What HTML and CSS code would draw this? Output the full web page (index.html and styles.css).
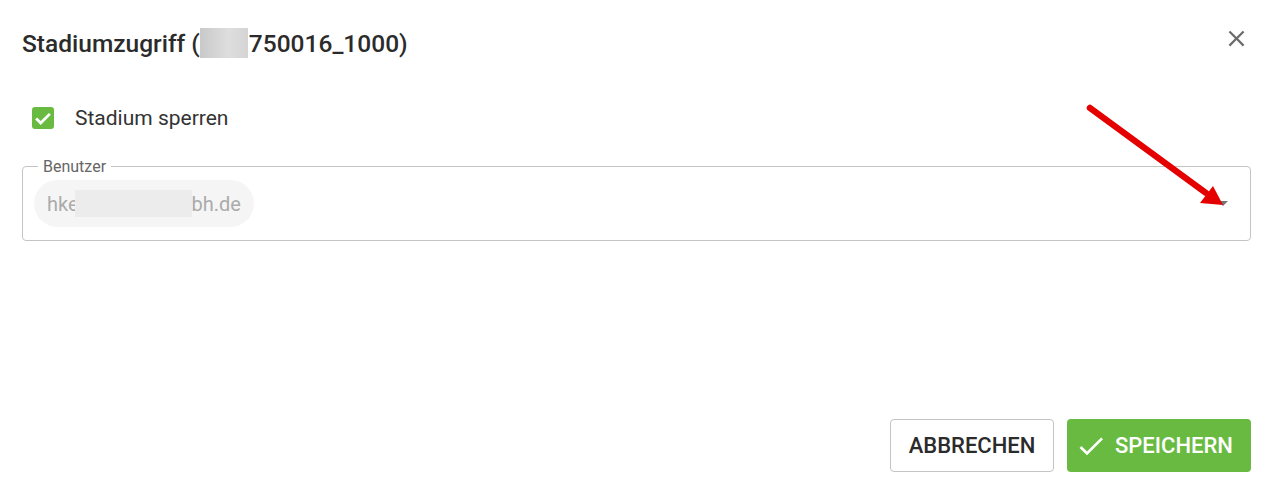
FILE: index.html
```html
<!doctype html>
<html lang="de">
<head>
    <meta charset="utf-8">
    <title>Stadiumzugriff</title>
    <link rel="stylesheet" href="styles.css">
</head>
<body>
    <div class="dialog">
        <div class="dialog-title">
            <h2>Stadiumzugriff (<span class="blur title-blur"></span>750016_1000)</h2>
            <button class="close" aria-label="Schließen">
                <svg viewBox="0 0 24 24" width="27" height="27"><path d="M19 6.41 17.59 5 12 10.59 6.41 5 5 6.41 10.59 12 5 17.59 6.41 19 12 13.41 17.59 19 19 17.59 13.41 12z" fill="#6b6b6b"/></svg>
            </button>
        </div>

        <div class="dialog-content">
            <label class="check-row">
                <span class="checkbox">
                    <svg viewBox="0 0 24 24" width="22" height="22"><path d="M4.5 12.5l5 5 10-10" fill="none" stroke="#fff" stroke-width="3"/></svg>
                </span>
                Stadium sperren
            </label>

            <fieldset class="select">
                <legend>Benutzer</legend>
                <div class="select-row">
                    <span class="chip">hke<span class="blur chip-blur"></span>bh.de</span>
                    <span class="caret"></span>
                </div>
            </fieldset>
        </div>

        <div class="dialog-actions">
            <button class="btn btn-outline">Abbrechen</button>
            <button class="btn btn-primary">
                <svg viewBox="0 0 24 24" width="32" height="32"><path d="M9 16.17 4.83 12l-1.42 1.41L9 19 21 7l-1.41-1.41z" fill="#fff"/></svg>
                Speichern
            </button>
        </div>

        <svg class="annotation" width="1272" height="493" viewBox="0 0 1272 493">
            <line x1="1090" y1="108" x2="1206" y2="193" stroke="#e50000" stroke-width="6.5" stroke-linecap="round"/>
            <polygon points="1223,205 1200,203 1213,186" fill="#e50000"/>
        </svg>
    </div>
</body>
</html>
```

FILE: styles.css
```css
* { box-sizing: border-box; }
body {
    margin: 0;
    font-family: Roboto, "Liberation Sans", sans-serif;
    color: #333;
    background: #fff;
}
.dialog {
    position: relative;
    height: 493px;
    display: flex;
    flex-direction: column;
}

.dialog-title {
    display: flex;
    align-items: center;
    justify-content: space-between;
    padding: 26px 22px 0 22px;
    height: 60px;
}
.dialog-title h2 {
    margin: 0;
    font-size: 24.5px;
    font-weight: 500;
    color: #2b2b2b;
    display: flex;
    align-items: center;
}
.blur {
    display: inline-block;
    background: linear-gradient(90deg, #c9c9c9, #dedede 60%, #d4d4d4);
}
.title-blur { width: 48px; height: 30px; margin-right: 1px; }
.close {
    border: 0;
    background: none;
    padding: 0;
    width: 27px;
    height: 27px;
    margin-top: -10px;
    cursor: pointer;
}

.dialog-content {
    padding: 0 21px 0 22px;
    flex: 1;
}
.check-row {
    display: flex;
    align-items: center;
    gap: 21px;
    margin: 46px 0 0 10px;
    font-size: 21px;
    color: #333;
}
.checkbox {
    width: 22px;
    height: 22px;
    border-radius: 3px;
    background: #68bb40;
    display: flex;
    align-items: center;
    justify-content: center;
}

.select {
    margin: 27px 0 0;
    padding: 0 0 0 11px;
    border: 1px solid #c4c4c4;
    border-radius: 4px;
    height: 84px;
}
.select legend {
    font-size: 16px;
    color: #666;
    padding: 0 5px;
    margin-left: 4px;
}
.select-row {
    display: flex;
    align-items: center;
    justify-content: space-between;
    padding-right: 22px;
    margin-top: 4px;
}
.chip {
    display: inline-flex;
    align-items: center;
    height: 47px;
    padding: 0 13px;
    border-radius: 24px;
    background: #f5f5f5;
    color: #ababab;
    font-size: 20px;
}
.chip-blur {
    width: 117px;
    height: 27px;
    background: #ececec;
    margin-left: -4px;
}
.caret {
    width: 0;
    height: 0;
    border-left: 5px solid transparent;
    border-right: 5px solid transparent;
    border-top: 5px solid #757575;
}

.dialog-actions {
    display: flex;
    justify-content: flex-end;
    gap: 13px;
    padding: 0 21px 21px 0;
}
.btn {
    height: 53px;
    border-radius: 4px;
    font-family: inherit;
    font-size: 22px;
    font-weight: 500;
    text-transform: uppercase;
    display: flex;
    align-items: center;
    justify-content: center;
    cursor: pointer;
}
.btn-outline {
    width: 164px;
    background: #fff;
    border: 1px solid #c4c4c4;
    color: #2b2b2b;
}
.btn-primary {
    width: 184px;
    background: #68bb40;
    border: 0;
    color: #fff;
    justify-content: flex-start;
    gap: 8px;
    padding-left: 8px;
}

.annotation {
    position: absolute;
    top: 0;
    left: 0;
    pointer-events: none;
}
```
